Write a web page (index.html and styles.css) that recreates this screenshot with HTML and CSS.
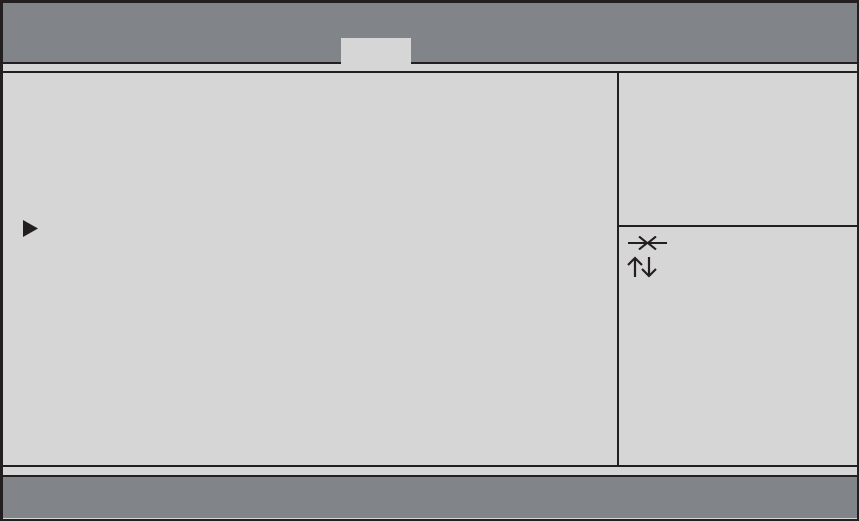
FILE: index.html
```html
<!DOCTYPE html>
<html lang="en">
<head>
    <meta charset="UTF-8">
    <meta name="viewport" content="width=device-width, initial-scale=1.0">
    <title>Setup</title>
    <link rel="stylesheet" href="styles.css">
</head>
<body>

    <div class="screen">
        <div class="topbar">
            <div class="tab"></div>
        </div>
        <div class="strip"></div>

        <div class="main">
            <div class="menu">
                <svg class="pointer" width="15" height="17" viewBox="0 0 15 17">
                    <polygon points="0,0 15,8.5 0,17" fill="#231f20"/>
                </svg>
            </div>
            <div class="side">
                <div class="help"></div>
                <div class="keys">
                    <svg width="42" height="42" viewBox="0 0 42 42" fill="none" stroke="#231f20" stroke-width="2.2">
                        <!-- select -->
                        <line x1="1" y1="7" x2="40" y2="7"/>
                        <polyline points="12,0.5 20,7 12,13.5"/>
                        <polyline points="29,0.5 21,7 29,13.5"/>
                        <!-- move -->
                        <line x1="8" y1="22" x2="8" y2="41"/>
                        <polyline points="1,29 8,22 15,29"/>
                        <line x1="22" y1="21" x2="22" y2="40"/>
                        <polyline points="15,33 22,40 29,33"/>
                    </svg>
                </div>
            </div>
        </div>

        <div class="strip bottom"></div>
        <div class="bottombar"></div>
    </div>

</body>
</html>
```

FILE: styles.css
```css
body {
    margin: 0;
    padding: 0;
    background: #d6d6d6;
    font-family: 'Liberation Sans', Arial, sans-serif;
}
.screen {
    width: 859px;
    height: 521px;
    box-sizing: border-box;
    display: flex;
    flex-direction: column;
    background: #d6d6d6;
    border: solid #231f20;
    border-width: 3px 2px 2px 3px;
}
.topbar {
    height: 59px;
    flex: none;
    display: flex;
    align-items: flex-end;
    padding-left: 338px;
    background: #818488;
    border-bottom: 2px solid #231f20;
}
.tab {
    width: 70px;
    height: 26px;
    margin-bottom: -2px;
    background: #d6d6d6;
}
.strip {
    height: 7px;
    flex: none;
    border-bottom: 2px solid #231f20;
}
.strip.bottom {
    height: 8px;
    border-top: 2px solid #231f20;
}
.main {
    height: 392px;
    flex: none;
    display: flex;
}
.menu {
    width: 616px;
    box-sizing: border-box;
    padding: 147px 0 0 20px;
    border-right: 2px solid #231f20;
}
.pointer {
    display: block;
}
.side {
    flex: 1;
    display: flex;
    flex-direction: column;
}
.help {
    height: 152px;
    border-bottom: 2px solid #231f20;
}
.keys {
    flex: 1;
    padding: 9px 0 0 8px;
}
.keys svg {
    display: block;
}
.bottombar {
    flex: 1;
    background: #818488;
    border-bottom: 1px solid #d6d6d6;
}
```
